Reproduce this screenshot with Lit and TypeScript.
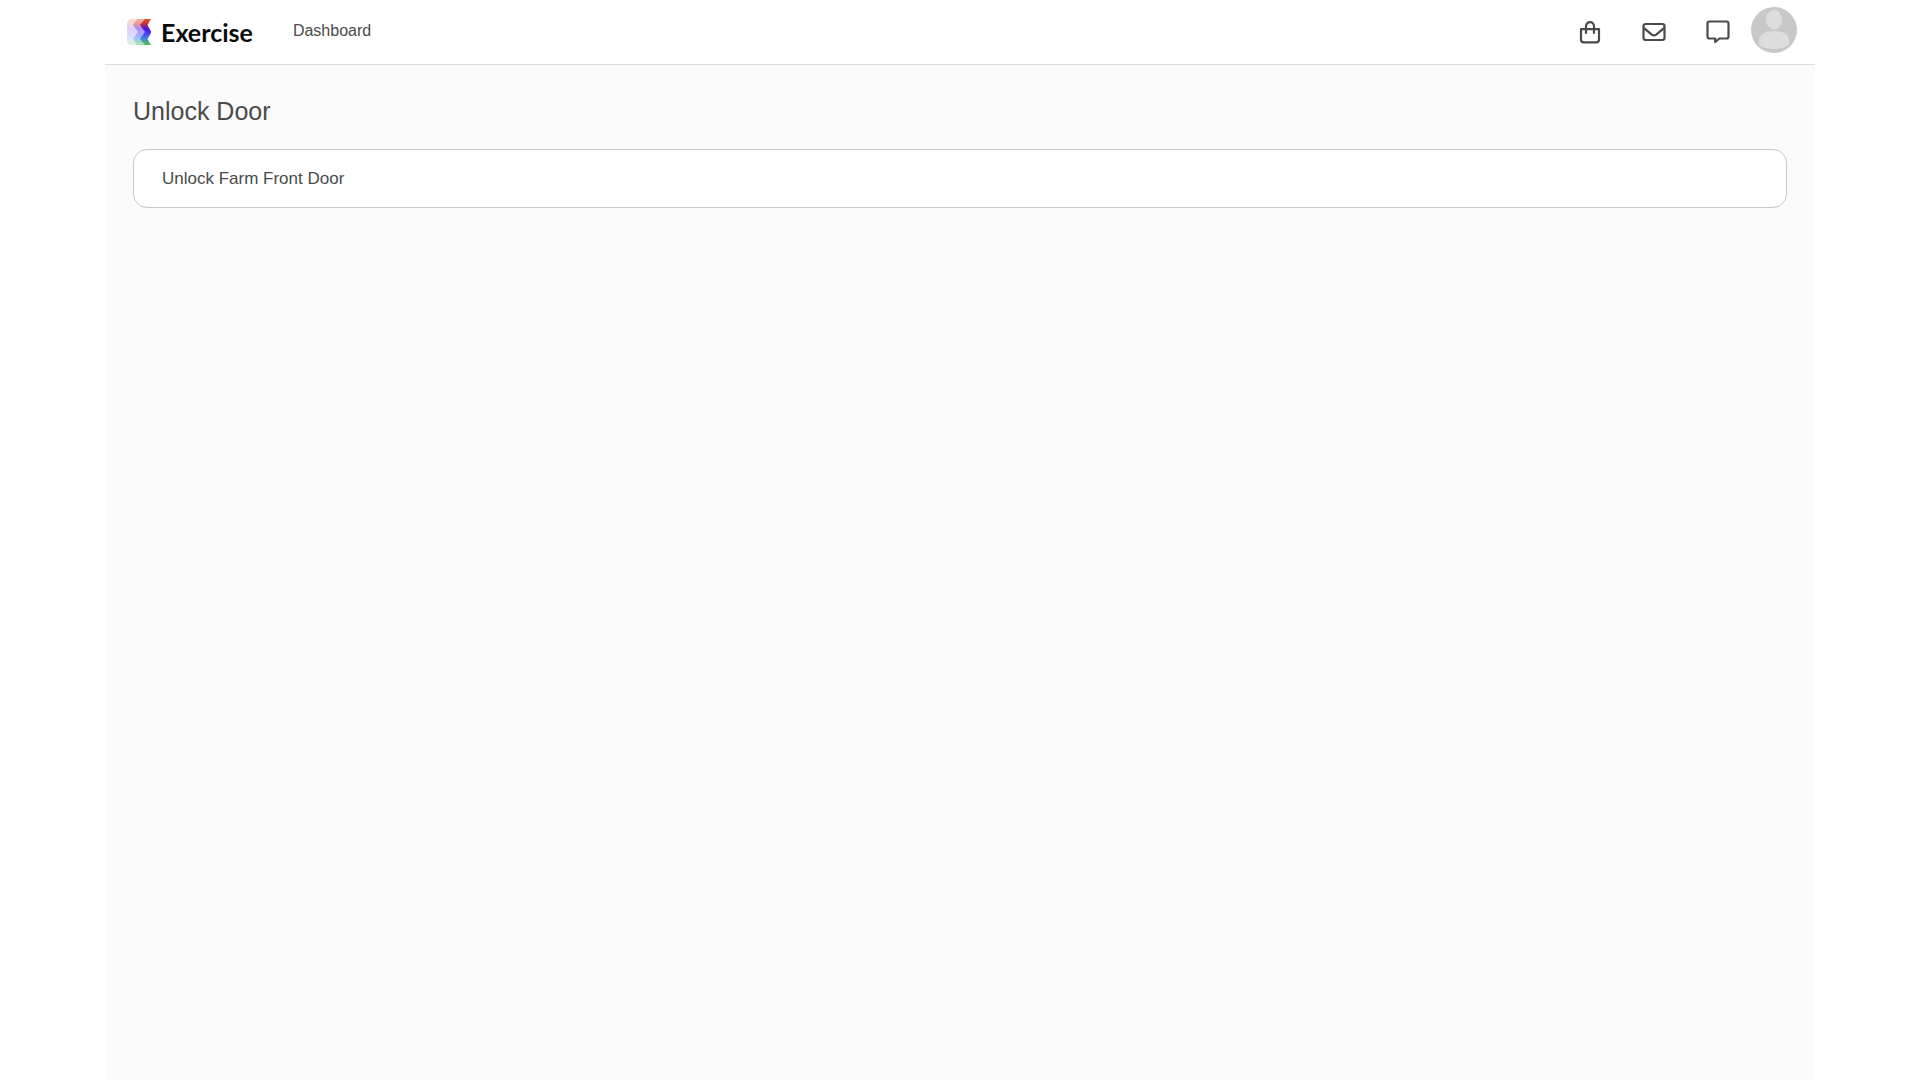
import { LitElement, css, html, svg } from "lit";
import { customElement } from "lit/decorators.js";

const logo = svg`
  <svg class="logo" viewBox="0 0 24 26" aria-hidden="true">
    <defs>
      <linearGradient id="strong" x1="0" y1="0" x2="0" y2="26" gradientUnits="userSpaceOnUse">
        <stop offset="0.05" stop-color="#e2492b"></stop>
        <stop offset="0.2" stop-color="#b82c42"></stop>
        <stop offset="0.38" stop-color="#4a16e8"></stop>
        <stop offset="0.55" stop-color="#4b39f5"></stop>
        <stop offset="0.76" stop-color="#4288e4"></stop>
        <stop offset="0.95" stop-color="#4fb861"></stop>
      </linearGradient>
      <clipPath id="tile">
        <path d="M5 0H24L20.500 6L24.500 13L20.500 20L24 26H5Q0 26 0 21V5Q0 0 5 0Z"></path>
      </clipPath>
    </defs>
    <g clip-path="url(#tile)">
      <rect width="24" height="26" fill="url(#strong)" opacity="0.2"></rect>
      <path d="M10 0L6 6L11 13L6 20L10 26H24V0Z" fill="url(#strong)" opacity="0.35"></path>
      <path d="M18 0L13 6L18 13L13 20L18 26H24L20.500 20L24.500 13L20.500 6L24 0Z" fill="url(#strong)"></path>
    </g>
  </svg>`;

const bagIcon = svg`
  <svg class="icon" viewBox="0 0 24 24" aria-hidden="true">
    <path d="M3 9.200H21V19.500Q21 22.300 18.200 22.300H5.800Q3 22.300 3 19.500Z"></path>
    <path d="M8 13V6.200a4 4 0 0 1 8 0V13"></path>
  </svg>`;

const mailIcon = svg`
  <svg class="icon" viewBox="0 0 24 24" aria-hidden="true">
    <rect x="1.500" y="4" width="21" height="16" rx="2.200"></rect>
    <path d="M2 8.200L9.800 14.600Q12 16.200 14.200 14.600L22 8.200"></path>
  </svg>`;

const chatIcon = svg`
  <svg class="icon" viewBox="0 0 24 24" aria-hidden="true">
    <path d="M3.500 1.500H20.500Q22.500 1.500 22.500 3.500V16.500Q22.500 18.500 20.500 18.500H13.500L9.200 22V18.500H3.500Q1.500 18.500 1.500 16.500V3.500Q1.500 1.500 3.500 1.500Z"></path>
  </svg>`;

const avatar = svg`
  <svg class="avatar" viewBox="0 0 46 46" aria-hidden="true">
    <circle cx="23" cy="23" r="23" fill="#c8c8c8"></circle>
    <ellipse cx="23" cy="12.700" rx="8" ry="9.700" fill="#dddddd"></ellipse>
    <path d="M8 34C8 27 14 24 23 24S38 27 38 34V38Q32 42 23 42T8 38Z" fill="#dddddd"></path>
  </svg>`;

@customElement("app-root")
export class AppRoot extends LitElement {
  static styles = css`
    :host {
      display: block;
      background: #ffffff;
      color: #4a4a4a;
      font-family: "Liberation Sans", Arial, sans-serif;
    }
    .page {
      box-sizing: border-box;
      display: flex;
      flex-direction: column;
      min-height: 100vh;
      margin: 0 105px;
      background: #fbfbfb;
    }
    .header {
      display: flex;
      align-items: center;
      justify-content: space-between;
      height: 64px;
      padding: 0 18px 0 22px;
      border-bottom: 1px solid #dcdcdc;
      background: #ffffff;
    }
    .start,
    .brand,
    .actions,
    .tools {
      display: flex;
      align-items: center;
    }
    .start {
      gap: 40px;
    }
    a {
      color: inherit;
      text-decoration: none;
    }
    .brand {
      gap: 10px;
      color: #0a0a0a;
      font-family: Lato, "Liberation Sans", sans-serif;
      font-size: 25px;
      font-weight: 700;
      line-height: 24px;
    }
    .logo {
      width: 24px;
      height: 26px;
    }
    .nav-link {
      font-size: 16px;
      line-height: 20px;
    }
    nav {
      padding-bottom: 2px;
    }
    .actions {
      gap: 21px;
    }
    .tools {
      gap: 40px;
    }
    button {
      display: flex;
      padding: 0;
      border: 0;
      background: none;
      color: inherit;
      cursor: pointer;
      font: inherit;
    }
    .icon {
      width: 24px;
      height: 24px;
      fill: none;
      stroke: currentColor;
      stroke-width: 2.2;
      stroke-linejoin: round;
      stroke-linecap: round;
    }
    .profile {
      padding-bottom: 4px;
    }
    .avatar {
      width: 46px;
      height: 46px;
    }
    .content {
      display: flex;
      flex-direction: column;
      gap: 24px;
      padding: 32px 28px;
    }
    h1 {
      margin: 0;
      font-size: 25px;
      font-weight: 400;
      line-height: 28px;
    }
    .door {
      width: 100%;
      padding: 18px 28px;
      border: 1px solid #c8c8c8;
      border-radius: 14px;
      background: #ffffff;
      font-size: 17px;
      line-height: 21px;
    }
  `;

  render() {
    return html`
      <div class="page">
        <header class="header">
          <div class="start">
            <a class="brand" href="#home">${logo}<span>Exercise</span></a>
            <nav><a class="nav-link" href="#dashboard">Dashboard</a></nav>
          </div>
          <div class="actions">
            <div class="tools">
              <button type="button" aria-label="Shop">${bagIcon}</button>
              <button type="button" aria-label="Mail">${mailIcon}</button>
              <button type="button" aria-label="Messages">${chatIcon}</button>
            </div>
            <button class="profile" type="button" aria-label="Profile">${avatar}</button>
          </div>
        </header>
        <main class="content">
          <h1>Unlock Door</h1>
          <button class="door" type="button">Unlock Farm Front Door</button>
        </main>
      </div>
    `;
  }
}
